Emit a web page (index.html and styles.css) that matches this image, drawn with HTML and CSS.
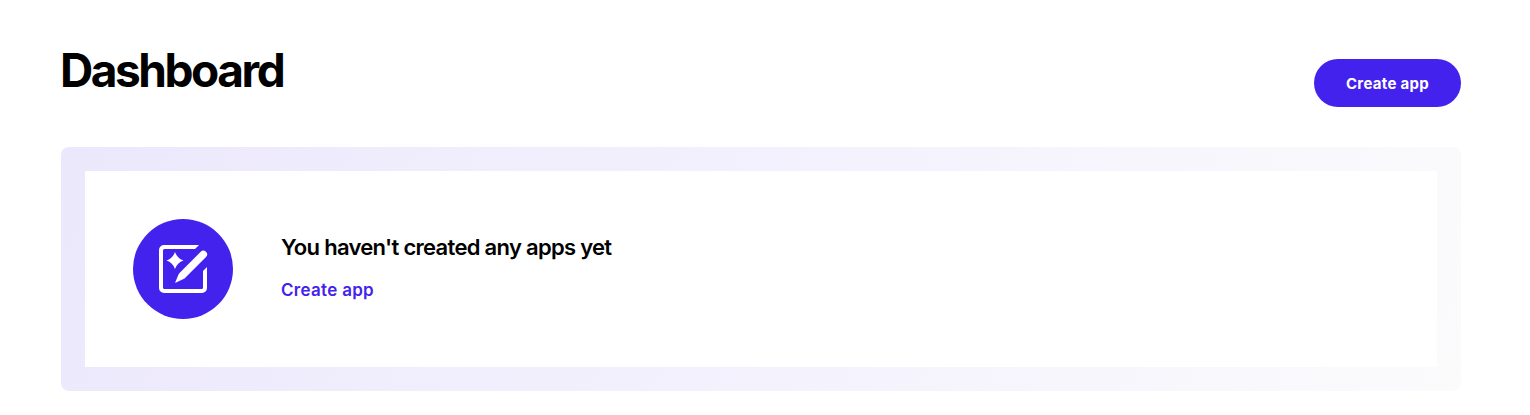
FILE: index.html
```html
<!DOCTYPE html>
<html lang="en">
<head>
<meta charset="utf-8">
<title>Dashboard</title>
<link rel="stylesheet" href="styles.css">
</head>
<body>
<main class="page">
  <header class="header">
    <h1 class="title">Dashboard</h1>
    <button class="button" type="button">Create app</button>
  </header>
  <section class="frame">
    <div class="card">
      <svg class="icon" viewBox="0 0 100 100" aria-hidden="true">
        <circle cx="50" cy="50" r="50" fill="#4422ee"/>
        <path d="M66 26H31A5 5 0 0 0 26 31V69A5 5 0 0 0 31 74H69A5 5 0 0 0 74 69V48L70 52V68.500A1.500 1.500 0 0 1 68.500 70H31.500A1.500 1.500 0 0 1 30 68.500V31.500A1.500 1.500 0 0 1 31.500 30H62Z" fill="#fff"/>
        <path d="M42 33Q44.200 39.300 50.500 41.500Q44.200 43.700 42 50Q39.800 43.700 33.500 41.500Q39.800 39.300 42 33Z" fill="#fff"/>
        <path d="M42 64L45.500 55.500Q46 54.500 47 53.500L67.700 32.800A3.600 3.600 0 0 1 73 38L52.500 58.500Q51.500 59.500 50.500 60Z" fill="#fff"/>
      </svg>
      <div class="content">
        <h2 class="heading">You haven't created any apps yet</h2>
        <a class="link" href="#">Create app</a>
      </div>
    </div>
  </section>
</main>
</body>
</html>
```
FILE: styles.css
```css
* { box-sizing: border-box; }
body { margin: 0; background: #fff; color: #000; font-family: Inter, "Liberation Sans", sans-serif; }
.page { padding: 40px 69px 24px 61px; }
.header { display: flex; justify-content: space-between; align-items: flex-start; height: 107px; }
.title { margin: 0 0 0 -1px; font-size: 46px; line-height: 60px; font-weight: 650; letter-spacing: -2.45px; }
.button { width: 147px; height: 48px; margin-top: 19px; padding: 1px 0 0; border: 0; border-radius: 24px; background: #4422ee; color: #fff; font: 700 15px/24px Inter, sans-serif; letter-spacing: .3px; }
.frame { padding: 24px; border-radius: 8px; background: linear-gradient(110deg, #ece8fc, #f4f2fd 55%, #fbfbfc); }
.card { display: flex; gap: 48px; height: 196px; padding: 48px; background: #fff; }
.icon { width: 100px; height: 100px; }
.content { padding-top: 12px; }
.heading { margin: 0 0 14px; font-size: 22px; line-height: 32px; font-weight: 600; letter-spacing: -.7px; white-space: nowrap; }
.link { display: block; color: #4422ee; font-size: 17px; line-height: 27px; font-weight: 600; letter-spacing: .3px; text-decoration: none; }
```
